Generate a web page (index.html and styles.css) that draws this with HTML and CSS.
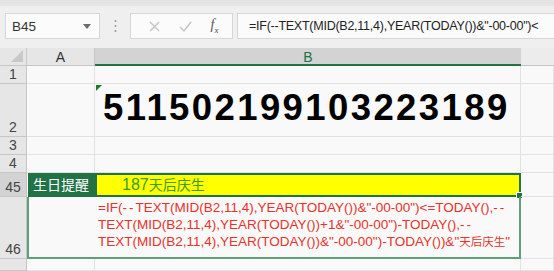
FILE: index.html
```html
<!DOCTYPE html>
<html>
<head>
    <meta charset="utf-8">
    <title>生日提醒</title>
    <link rel="stylesheet" href="styles.css">
</head>
<body>
    <div class="toolbar">
        <div class="namebox">
            <span>B45</span>
            <svg class="caret" width="8" height="5" viewBox="0 0 8 5"><path d="M0 0 L8 0 L4 5 Z" fill="#6a6a6a"/></svg>
        </div>
        <div class="grip">
            <svg width="3" height="14" viewBox="0 0 3 14"><circle cx="1.5" cy="2" r="1" fill="#9a9a9a"/><circle cx="1.5" cy="7" r="1" fill="#9a9a9a"/><circle cx="1.5" cy="12" r="1" fill="#9a9a9a"/></svg>
        </div>
        <div class="fxbox">
            <svg width="11" height="11" viewBox="0 0 11 11"><path d="M1 1 L10 10 M10 1 L1 10" stroke="#c4c4c4" stroke-width="1.4"/></svg>
            <svg width="13" height="11" viewBox="0 0 13 11"><path d="M1 6 L5 10 L12 1" stroke="#c4c4c4" stroke-width="1.4" fill="none"/></svg>
            <span class="fx">f<sub>x</sub></span>
        </div>
        <div class="formula">=IF(--TEXT(MID(B2,11,4),YEAR(TODAY())&amp;"-00-00")&lt;</div>
    </div>

    <div class="sheet">
        <div class="corner"><svg width="12" height="12" viewBox="0 0 12 12"><path d="M12 0 L12 12 L0 12 Z" fill="#c8c8c8"/></svg></div>
        <div class="col-head">A</div>
        <div class="col-head selected">B</div>
        <div class="col-head empty"></div>

        <div class="row-head">1</div>
        <div class="cell"></div>
        <div class="cell"></div>
        <div class="cell"></div>

        <div class="row-head">2</div>
        <div class="cell"></div>
        <div class="cell id-cell"><span class="flag"></span>511502199103223189</div>
        <div class="cell"></div>

        <div class="row-head">3</div>
        <div class="cell"></div>
        <div class="cell"></div>
        <div class="cell"></div>

        <div class="row-head">4</div>
        <div class="cell"></div>
        <div class="cell"></div>
        <div class="cell"></div>

        <div class="row-head active">45</div>
        <div class="cell label-cell">生日提醒</div>
        <div class="cell result-cell">187<span class="cjk">天后庆生</span><span class="handle"></span></div>
        <div class="cell"></div>

        <div class="row-head">46</div>
        <div class="cell sel-left"></div>
        <div class="cell formula-cell sel-right">=IF(<span class="dd">--</span>TEXT(MID(B2,11,4),YEAR(TODAY())&amp;"-00-00")&lt;=TODAY(),<span class="dd">--</span><br>TEXT(MID(B2,11,4),YEAR(TODAY())+1&amp;"-00-00")-TODAY(),<span class="dd">--</span><br>TEXT(MID(B2,11,4),YEAR(TODAY())&amp;"-00-00")-TODAY())&amp;"<span class="cjk-small">天后庆生</span>"</div>
        <div class="cell"></div>

        <div class="row-head"></div>
        <div class="cell"></div>
        <div class="cell"></div>
        <div class="cell"></div>
    </div>
</body>
</html>
```

FILE: styles.css
```css
body {
    margin: 0;
    width: 554px;
    height: 271px;
    overflow: hidden;
    background-color: #ececec;
    font-family: "Liberation Sans", "Noto Sans CJK SC", sans-serif;
}
.toolbar {
    height: 48px;
    box-sizing: border-box;
    padding: 13px 0 9px 5px;
    display: flex;
    align-items: stretch;
    background: linear-gradient(#e4e4e4 0, #e4e4e4 6px, #efefef 6px);
}
.namebox {
    width: 95px;
    box-sizing: border-box;
    background-color: #fbfbfb;
    border: 1px solid #d6d6d6;
    display: flex;
    align-items: center;
    justify-content: space-between;
    padding: 0 8px 0 6px;
    font-size: 13.5px;
    color: #333;
}
.grip {
    width: 30px;
    display: flex;
    align-items: center;
    justify-content: center;
}
.fxbox {
    width: 103px;
    box-sizing: border-box;
    background-color: #fbfbfb;
    border: 1px solid #d6d6d6;
    display: flex;
    align-items: center;
    justify-content: space-around;
    padding: 0 4px 0 8px;
}
.fx {
    font-family: "Liberation Serif", serif;
    font-style: italic;
    font-size: 14px;
    color: #555;
}
.fx sub {
    font-size: 9px;
}
.formula {
    flex: 1;
    margin-left: 4px;
    background-color: #fbfbfb;
    border: 1px solid #d6d6d6;
    border-right: none;
    padding: 5px 0 0 11px;
    font-size: 12.5px;
    letter-spacing: -0.25px;
    color: #222;
    white-space: nowrap;
    overflow: hidden;
}
.sheet {
    display: grid;
    grid-template-columns: 27px 68px 426px 1fr;
    grid-template-rows: 18px 18px 53px 18px 18px 24px 62px 1fr;
    height: 223px;
    background-color: #f9f9f9;
}
.corner {
    background-color: #e6e6e6;
    border-right: 1px solid #c6c6c6;
    border-bottom: 1px solid #c6c6c6;
    box-sizing: border-box;
    display: flex;
    align-items: flex-end;
    justify-content: flex-end;
    padding: 0 3px 3px 0;
}
.col-head {
    background-color: #e6e6e6;
    border-right: 1px solid #c6c6c6;
    border-bottom: 1px solid #c6c6c6;
    box-sizing: border-box;
    text-align: center;
    font-size: 14px;
    line-height: 18px;
    color: #333;
}
.col-head.selected {
    background-color: #d3d3d3;
    color: #217346;
    border-bottom: 2px solid #217346;
    border-right: none;
}
.col-head.empty {
    background-color: #ececec;
    border-right: none;
}
.row-head {
    background-color: #e6e6e6;
    border-right: 1px solid #c6c6c6;
    border-bottom: 1px solid #c6c6c6;
    box-sizing: border-box;
    display: flex;
    align-items: flex-end;
    justify-content: center;
    font-size: 14px;
    line-height: 17px;
    color: #444;
}
.row-head.active {
    background-color: #d3d3d3;
}
.cell {
    border-right: 1px solid #e2e2e2;
    border-bottom: 1px solid #e2e2e2;
    box-sizing: border-box;
    position: relative;
    white-space: nowrap;
}
.id-cell {
    display: flex;
    align-items: flex-end;
    padding: 0 0 10px 8px;
    font-size: 36.5px;
    font-weight: bold;
    letter-spacing: 2.4px;
    line-height: 36px;
    color: #000;
}
.flag {
    position: absolute;
    left: 1px;
    top: 1px;
    border-top: 6px solid #1e7a2c;
    border-right: 6px solid transparent;
}
.label-cell {
    background-color: #217346;
    color: #fff;
    font-size: 14px;
    line-height: 22px;
    padding-left: 5px;
    border: none;
    border-top: 1px solid #217346;
    margin-left: 1px;
}
.result-cell {
    background-color: #ffff00;
    border: 2px solid #217346;
    color: #3d9a1e;
    font-size: 16px;
    line-height: 19px;
    padding-left: 25px;
}
.result-cell .cjk {
    font-size: 14px;
}
.handle {
    position: absolute;
    right: -4px;
    bottom: -4px;
    width: 5px;
    height: 5px;
    background-color: #217346;
    border: 1px solid #fff;
}
.sel-left {
    border-left: 2px solid #5f9f7c;
    border-bottom: 2px solid #5f9f7c;
    border-right: none;
}
.sel-right {
    border-right: 2px solid #5f9f7c;
    border-bottom: 2px solid #5f9f7c;
}
.formula-cell {
    color: #e8322b;
    font-size: 13.5px;
    line-height: 17px;
    padding: 2px 0 0 3px;
}
.dd {
    letter-spacing: 2px;
}
.cjk-small {
    font-size: 11.5px;
}
```
